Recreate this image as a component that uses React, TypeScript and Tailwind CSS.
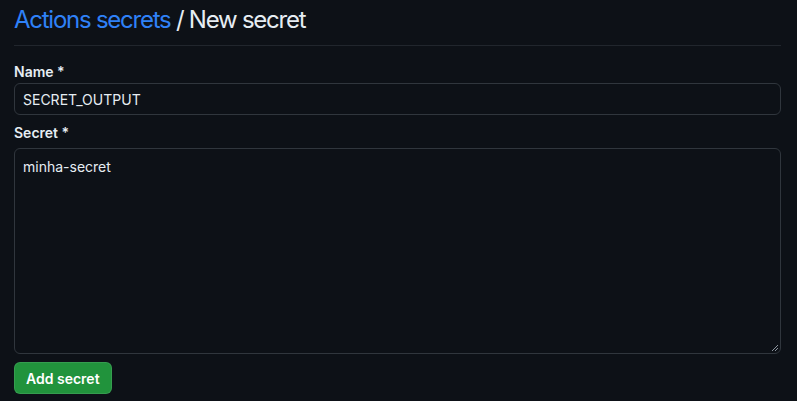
import React from "react";

export default function App() {
  return (
    <div
      className="w-[797px] h-[401px] bg-[#0d1117] text-[#e6edf3] overflow-hidden"
      style={{ fontFamily: "Inter, 'Noto Sans', 'Liberation Sans', sans-serif" }}
    >
      <div className="pl-[14px] pr-[16px]">
        <div className="h-[46px] pt-[5px] border-b border-[#21262d]">
          <h1 className="text-[24px] leading-[30px] font-normal tracking-[-1.25px]">
            <a className="text-[#2f81f7]">Actions secrets</a>
            <span> / New secret</span>
          </h1>
        </div>
        <div className="pt-[16px]">
          <label className="block text-[14px] leading-[20px] font-semibold mb-[1px]">Name *</label>
          <div className="h-[32px] border border-[#30363d] rounded-[6px] flex items-center px-[8px] text-[14px] text-[#e6edf3]">
            SECRET_OUTPUT
          </div>
          <label className="block text-[14px] leading-[20px] font-semibold mt-[8px] mb-[5px]">Secret *</label>
          <div className="relative h-[206px] border border-[#30363d] rounded-[6px] px-[8px] pt-[8px] text-[14px] leading-[20px]">
            minha-secret
            <svg className="absolute right-[1px] bottom-[1px]" width="9" height="9" viewBox="0 0 9 9">
              <path d="M8 2 L2 8 M8 5 L5 8" stroke="#8b949e" strokeWidth="1" />
            </svg>
          </div>
          <button className="mt-[8px] h-[32px] px-[11px] rounded-[6px] bg-[#21933c] text-white text-[14px] font-semibold border border-[rgba(240,246,252,0.1)]">
            Add secret
          </button>
        </div>
      </div>
    </div>
  );
}
